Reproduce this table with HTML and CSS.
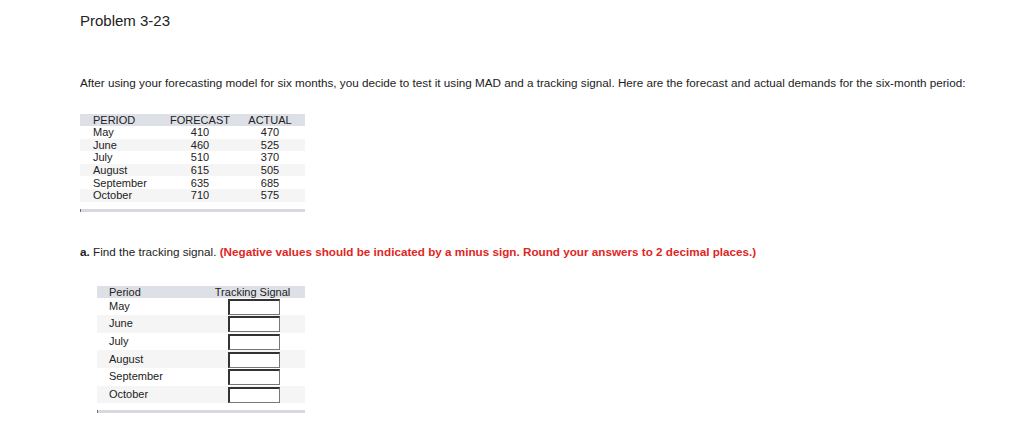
FILE: index.html
```html
<!DOCTYPE html>
<html>
<head>
<meta charset="utf-8">
<link rel="stylesheet" href="styles.css">
</head>
<body>
<div class="page">
  <h1 class="title">Problem 3-23</h1>
  <p class="intro">After using your forecasting model for six months, you decide to test it using MAD and a tracking signal. Here are the forecast and actual demands for the six-month period:</p>

  <div class="data">
    <table class="t1">
      <thead>
        <tr><th class="c1">PERIOD</th><th class="c2">FORECAST</th><th class="c3">ACTUAL</th></tr>
      </thead>
      <tbody>
        <tr><td class="c1">May</td><td class="c2">410</td><td class="c3">470</td></tr>
        <tr><td class="c1">June</td><td class="c2">460</td><td class="c3">525</td></tr>
        <tr><td class="c1">July</td><td class="c2">510</td><td class="c3">370</td></tr>
        <tr><td class="c1">August</td><td class="c2">615</td><td class="c3">505</td></tr>
        <tr><td class="c1">September</td><td class="c2">635</td><td class="c3">685</td></tr>
        <tr><td class="c1">October</td><td class="c2">710</td><td class="c3">575</td></tr>
      </tbody>
    </table>
    <div class="bar"></div>
  </div>

  <p class="question"><b>a.</b> Find the tracking signal. <span class="warn">(Negative values should be indicated by a minus sign. Round your answers to 2 decimal places.)</span></p>

  <div class="answer">
    <table class="t2">
      <thead>
        <tr><th class="d1">Period</th><th class="d2">Tracking Signal</th></tr>
      </thead>
      <tbody>
        <tr><td class="d1">May</td><td class="d2"><span class="box"></span></td></tr>
        <tr><td class="d1">June</td><td class="d2"><span class="box"></span></td></tr>
        <tr><td class="d1">July</td><td class="d2"><span class="box"></span></td></tr>
        <tr><td class="d1">August</td><td class="d2"><span class="box"></span></td></tr>
        <tr><td class="d1">September</td><td class="d2"><span class="box"></span></td></tr>
        <tr><td class="d1">October</td><td class="d2"><span class="box"></span></td></tr>
      </tbody>
    </table>
    <div class="bar"></div>
  </div>
</div>
</body>
</html>
```

FILE: styles.css
```css
html, body {
  margin: 0;
  padding: 0;
  background: #ffffff;
}

body {
  font-family: "Liberation Sans", Arial, sans-serif;
  color: #222222;
}

.page {
  padding: 0 0 0 80px;
}

.title {
  margin: 0;
  padding-top: 12px;
  font-size: 15px;
  font-weight: normal;
  line-height: 17px;
  color: #222222;
}

.intro {
  margin: 0;
  padding-top: 47px;
  font-size: 11.7px;
  line-height: 13px;
  color: #222222;
}

.data {
  width: 225px;
  margin-top: 25px;
}

table {
  border-collapse: collapse;
  border-spacing: 0;
  font-size: 11px;
  color: #222222;
}

.t1 {
  width: 225px;
  table-layout: fixed;
}

.t1 th, .t1 td {
  padding: 0;
  height: 12.6px;
  line-height: 12px;
  font-weight: normal;
}

.t1 thead tr {
  background: #dde0e7;
}

.t1 thead th {
  height: 12px;
}

.t1 tbody tr:nth-child(even) {
  background: #f5f5f5;
}

.c1 {
  width: 72px;
  padding-left: 13px !important;
  text-align: left;
}

.c2 {
  width: 70px;
  text-align: center;
}

.c3 {
  width: 70px;
  text-align: center;
}

.bar {
  margin-top: 7px;
  height: 3px;
  background: #d6d9de;
  border-left: 1px solid #6f6f6f;
}

.question {
  margin: 0;
  padding-top: 33px;
  font-size: 11.7px;
  line-height: 13px;
  color: #222222;
}

.question b {
  font-weight: bold;
}

.warn {
  color: #e0261f;
  font-weight: bold;
}

.answer {
  width: 208px;
  margin-left: 17px;
  margin-top: 28px;
}

.t2 {
  width: 208px;
  table-layout: fixed;
}

.t2 th, .t2 td {
  padding: 0;
  font-weight: normal;
}

.t2 thead tr {
  background: #dde0e7;
}

.t2 thead th {
  height: 12px;
  line-height: 12px;
}

.t2 tbody td {
  height: 17.6px;
  line-height: 17px;
}

.t2 tbody tr:nth-child(even) {
  background: #f5f5f5;
}

.d1 {
  width: 91px;
  padding-left: 12px !important;
  text-align: left;
}

.d2 {
  width: 105px;
  text-align: center;
}

.t2 tbody .d2 {
  text-align: left;
  padding-left: 28px !important;
}

.box {
  display: block;
  width: 49px;
  height: 13px;
  margin-top: 1px;
  background: #ffffff;
  border-top: 2px solid #333333;
  border-left: 2px solid #333333;
  border-right: 1px solid #777777;
  border-bottom: 1px solid #777777;
}

.answer .bar {
  margin-top: 7px;
}
```
